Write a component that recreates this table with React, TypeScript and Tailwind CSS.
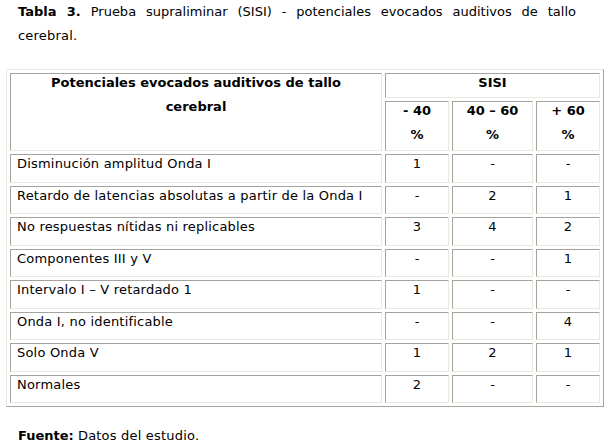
import React from "react";

const rows: string[][] = [
  ["Disminución amplitud Onda I", "1", "-", "-"],
  ["Retardo de latencias absolutas a partir de la Onda I", "-", "2", "1"],
  ["No respuestas nítidas ni replicables", "3", "4", "2"],
  ["Componentes III y V", "-", "-", "1"],
  ["Intervalo I – V retardado 1", "1", "-", "-"],
  ["Onda I, no identificable", "-", "-", "4"],
  ["Solo Onda V", "1", "2", "1"],
  ["Normales", "2", "-", "-"],
];

const cell =
  "border border-t-[#a3a3a0] border-l-[#a3a3a0] border-r-[#ebe9df] border-b-[#ebe9df] bg-white";

export default function App() {
  return (
    <div className="w-[610px] h-[447px] bg-white text-black text-[13px] font-['DejaVu_Sans',Verdana,sans-serif] overflow-hidden">
      <div className="w-[576px] pl-[18px] leading-[24px]">
        <div className="text-justify [text-align-last:justify]">
          <b>Tabla 3.</b> Prueba supraliminar (SISI) - potenciales evocados auditivos de tallo
        </div>
        <div className="tracking-[0.2px]">cerebral.</div>
      </div>

      <div className="mt-[21px] ml-[6px] w-[598px] border border-t-[#ebe9df] border-l-[#ebe9df] border-r-[#a3a3a0] border-b-[#a3a3a0] p-[3px] grid grid-cols-[372px_64px_81px_64px] grid-rows-[25px_50px_repeat(8,28.5px)] gap-[3px]">
        <div className={`${cell} row-span-2 font-bold text-center leading-[24px]`}>
          <div className="-mt-[3px]">
            Potenciales evocados auditivos de tallo
            <br />
            cerebral
          </div>
        </div>
        <div className={`${cell} col-span-3 font-bold text-center leading-[24px]`}>
          <div className="-mt-[3px]">SISI</div>
        </div>
        <div className={`${cell} font-bold text-center leading-[24px]`}>
          <div className="-mt-[3px]">
            - 40
            <br />%
          </div>
        </div>
        <div className={`${cell} font-bold text-center leading-[24px]`}>
          <div className="-mt-[3px]">
            40 – 60
            <br />%
          </div>
        </div>
        <div className={`${cell} font-bold text-center leading-[24px]`}>
          <div className="-mt-[3px]">
            + 60
            <br />%
          </div>
        </div>
        {rows.map((r, i) => (
          <React.Fragment key={i}>
            <div className={`${cell} pl-[6px] leading-[18px] whitespace-nowrap tracking-[0.2px]`}>{r[0]}</div>
            <div className={`${cell} text-center leading-[18px]`}>{r[1]}</div>
            <div className={`${cell} text-center leading-[18px]`}>{r[2]}</div>
            <div className={`${cell} text-center leading-[18px]`}>{r[3]}</div>
          </React.Fragment>
        ))}
      </div>

      <p className="mt-[17px] pl-[18px] leading-[24px]">
        <b>Fuente:</b> <span className="tracking-[0.2px]">Datos del estudio.</span>
      </p>
    </div>
  );
}
